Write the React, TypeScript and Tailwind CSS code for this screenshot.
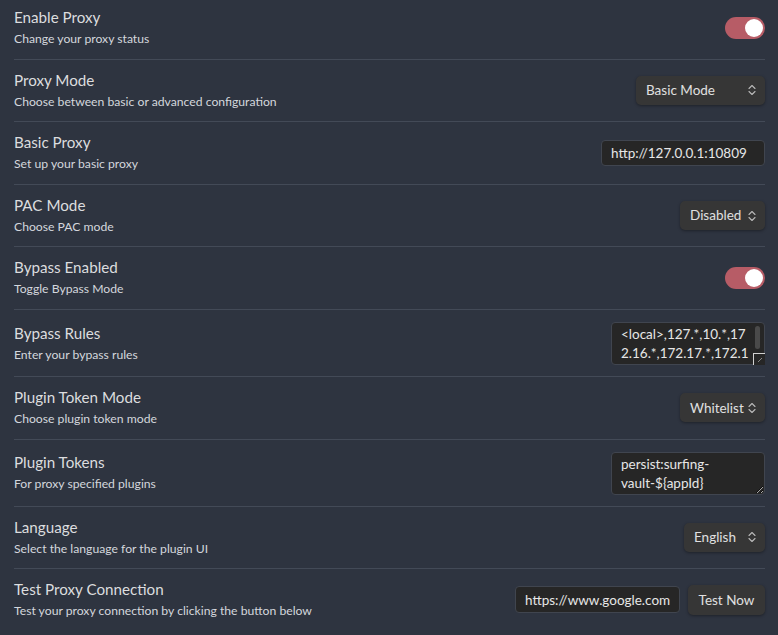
import React from "react";

const font = { fontFamily: 'Lato, "Noto Sans", sans-serif' };

const Chevron = () => (
	<svg width="8" height="12" viewBox="0 0 8 12" fill="none" className="shrink-0">
		<path d="M1 4.5 L4 1.5 L7 4.5" stroke="#b8b8b8" strokeWidth="1.1" strokeLinecap="round" strokeLinejoin="round" />
		<path d="M1 7.5 L4 10.5 L7 7.5" stroke="#b8b8b8" strokeWidth="1.1" strokeLinecap="round" strokeLinejoin="round" />
	</svg>
);

const Toggle = () => (
	<div className="w-[40px] h-[22px] rounded-full bg-[#b75c66] flex items-center justify-end px-[2px]">
		<div className="w-[18px] h-[18px] rounded-full bg-white" />
	</div>
);

const Select = ({ label, width }: { label: string; width: string }) => (
	<div
		className={`${width} h-[29px] rounded-[5px] bg-[#363636] shadow-[0_1px_3px_rgba(0,0,0,0.35)] flex items-center justify-between pl-[10px] pr-[9px] text-[13.5px] text-[#e0e0e0]`}>
		<span>{label}</span>
		<Chevron />
	</div>
);

const Row = ({
	title,
	desc,
	first,
	tall,
	children,
}: {
	title: string;
	desc: string;
	first?: boolean;
	tall?: boolean;
	children: React.ReactNode;
}) => (
	<div
		className={`flex items-center justify-between ${
			first ? "pt-[7px] pb-[10px]" : tall ? "border-t border-[#434a57] pt-[12px] pb-[11px]" : "border-t border-[#434a57] py-[10px]"
		}`}>
		<div className="flex flex-col">
			<span className="text-[15.2px] leading-[20px] text-[#dcdddf]">{title}</span>
			<span className="mt-[3px] text-[12.2px] leading-[18.6px] text-[#d4d7dd]">{desc}</span>
		</div>
		<div className="flex items-center gap-[8px]">{children}</div>
	</div>
);

export default function App() {
	return (
		<div className="w-[778px] h-[635px] overflow-hidden bg-[#2e3440] pl-[14px] pr-[13px]" style={font}>
			<Row title="Enable Proxy" desc="Change your proxy status" first>
				<Toggle />
			</Row>
			<Row title="Proxy Mode" desc="Choose between basic or advanced configuration">
				<Select label="Basic Mode" width="w-[129px]" />
			</Row>
			<Row title="Basic Proxy" desc="Set up your basic proxy">
				<input
					readOnly
					value="http://127.0.0.1:10809"
					className="w-[164px] h-[26px] rounded-[4px] bg-[#262626] border border-[#40454f] px-[9px] text-[13.5px] text-[#e6e6e6] outline-none"
				/>
			</Row>
			<Row title="PAC Mode" desc="Choose PAC mode">
				<Select label="Disabled" width="w-[85px]" />
			</Row>
			<Row title="Bypass Enabled" desc="Toggle Bypass Mode">
				<Toggle />
			</Row>
			<Row title="Bypass Rules" desc="Enter your bypass rules" tall>
				<div className="relative">
					<textarea
						readOnly
						value="<local>,127.*,10.*,172.16.*,172.17.*,172.18.*,172.19.*,172.20.*,172.21.*,192.168.*"
						className="block w-[154px] h-[43px] rounded-[4px] bg-[#262626] border border-[#40454f] pl-[9px] pr-[10px] py-[2px] text-[13.5px] leading-[19px] text-[#e6e6e6] outline-none resize-none overflow-hidden break-all"
					/>
					<div className="absolute right-[5px] top-[4px] w-[5px] h-[23px] rounded-[3px] bg-[#4a4a4a]" />
					<div className="absolute right-0 bottom-0 w-[12px] h-[12px] border-l border-t border-[#d0d0d0] bg-[#262626]">
						<svg width="10" height="10" viewBox="0 0 10 10" className="absolute right-[1px] bottom-[1px]">
							<path d="M8 4 L4 8" stroke="#888" strokeWidth="1" />
						</svg>
					</div>
				</div>
			</Row>
			<Row title="Plugin Token Mode" desc="Choose plugin token mode">
				<Select label="Whitelist" width="w-[85px]" />
			</Row>
			<Row title="Plugin Tokens" desc="For proxy specified plugins" tall>
				<textarea
					readOnly
					value={"persist:surfing-vault-${appId}"}
					className="block w-[154px] h-[43px] rounded-[4px] bg-[#262626] border border-[#40454f] px-[9px] py-[2px] text-[13.5px] leading-[19px] text-[#e6e6e6] outline-none overflow-hidden"
				/>
			</Row>
			<Row title="Language" desc="Select the language for the plugin UI">
				<Select label="English" width="w-[81px]" />
			</Row>
			<Row title="Test Proxy Connection" desc="Test your proxy connection by clicking the button below">
				<input
					readOnly
					value="https://www.google.com"
					className="w-[165px] h-[27px] rounded-[4px] bg-[#262626] border border-[#40454f] px-[9px] text-[13.5px] text-[#e6e6e6] outline-none"
				/>
				<button className="w-[77px] h-[30px] rounded-[5px] bg-[#363636] shadow-[0_1px_3px_rgba(0,0,0,0.35)] text-[13.5px] text-[#e0e0e0]">
					Test Now
				</button>
			</Row>
		</div>
	);
}
